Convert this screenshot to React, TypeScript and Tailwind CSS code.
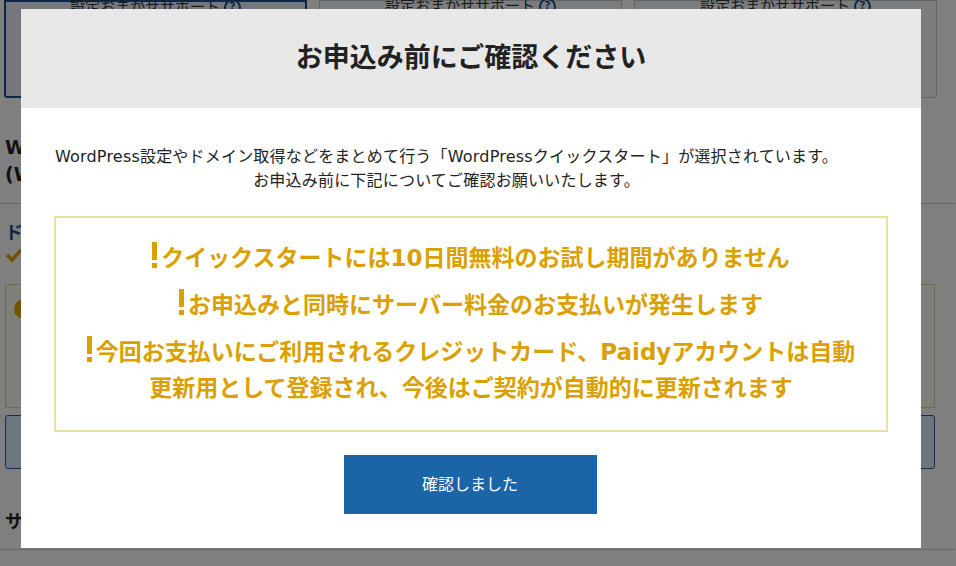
import React from 'react';

const FONT = { fontFamily: '"DejaVu Sans", "Noto Sans CJK JP", sans-serif' };

function Bang() {
  return (
    <span className="mr-[4px] inline-block align-[-2px]">
      <span className="block h-[18px] w-[5px] bg-[#d9a000]" />
      <span className="mt-[3px] block h-[5px] w-[5px] bg-[#d9a000]" />
    </span>
  );
}

function PlanCard({ selected }: { selected?: boolean }) {
  return (
    <div
      className={
        selected
          ? 'h-[98px] w-[303px] rounded-b-[3px] border-2 border-[#1f4f8f] bg-[#e8f1fb]'
          : 'h-[98px] w-[303px] rounded-b-[3px] border border-[#c8c8c8] bg-[#f6f9fd]'
      }
    >
      <div className="-mt-[4px] flex items-center justify-center gap-[4px] text-[15px] leading-[18px] text-[#333]">
        設定おまかせサポート
        <span className="flex h-[17px] w-[17px] items-center justify-center rounded-full border-2 border-[#1f4f8f] text-[11px] font-bold text-[#1f4f8f]">
          ?
        </span>
      </div>
    </div>
  );
}

// page behind the dialog
function Page() {
  return (
    <div className="min-h-[566px] w-[956px] overflow-hidden bg-white" style={FONT}>
      <div className="flex w-[954px] gap-[12px] pl-[4px]">
        <PlanCard selected />
        <PlanCard />
        <PlanCard />
      </div>
      <div className="pl-[5px] pt-[36px] text-[19px] font-bold leading-[27px] text-[#222]">
        <div>WordPressクイックスタート</div>
        <div>(WordPressテーマ)</div>
      </div>
      <div className="mt-[15px] h-px w-[954px] bg-[#c8c8c8]" />
      <div className="pl-[5px] pt-[16px] text-[18px] font-bold leading-[26px] text-[#1f4f8f]">ドメイン</div>
      <div className="pl-[5px] pt-[2px]">
        <svg width="18" height="14" viewBox="0 0 18 14">
          <path d="M2 7 L7 12 L16 2" fill="none" stroke="#e0a000" strokeWidth="3.5" />
        </svg>
      </div>
      <div className="ml-[5px] mt-[22px] flex h-[124px] w-[930px] border border-[#d8d3a8] bg-[#fffef2] px-[8px] pt-[14px]">
        <span className="h-[20px] w-[20px] rounded-full bg-[#e0a800]" />
      </div>
      <div className="ml-[5px] mt-[7px] h-[54px] w-[930px] rounded-[3px] border border-[#2a5ea8] bg-[#d6ecff]" />
      <div className="pl-[5px] pt-[42px] text-[18px] font-bold leading-[22px] text-[#222]">サーバー</div>
      <div className="mt-[16px] h-px w-[954px] bg-[#c8c8c8]" />
    </div>
  );
}

export default function App() {
  return (
    <div className="relative h-[566px] w-[956px] overflow-hidden">
      <Page />
      <div className="absolute inset-0 bg-black/50">
        <div className="ml-[21px] mt-[9px] w-[900px] bg-white" style={FONT}>
          <div className="flex h-[99px] items-center justify-center bg-[#e8e8e8]">
            <h1 className="text-[27px] font-bold text-[#222]">お申込み前にご確認ください</h1>
          </div>
          <div className="px-[33px] pb-[34px] pt-[37px]">
            <p className="w-[785px] text-center text-[16px] leading-[24px] tracking-[0.2px] text-[#222]">
              WordPress設定やドメイン取得などをまとめて行う「WordPressクイックスタート」が選択されています。
              <br />
              お申込み前に下記についてご確認お願いいたします。
            </p>
            <div className="mt-[23px] flex w-[834px] flex-col gap-[11px] border-2 border-[#e8e09c] pb-[24px] pt-[22px] text-center text-[23px] font-bold leading-[36px] text-[#d9a000]">
              <p>
                <Bang />
                クイックスタートには10日間無料のお試し期間がありません
              </p>
              <p>
                <Bang />
                お申込みと同時にサーバー料金のお支払いが発生します
              </p>
              <p>
                <Bang />
                今回お支払いにご利用されるクレジットカード、Paidyアカウントは自動
                <br />
                更新用として登録され、今後はご契約が自動的に更新されます
              </p>
            </div>
            <div className="mt-[23px] flex justify-center pr-[2px]">
              <button className="h-[59px] w-[253px] bg-[#1b64a6] text-[16px] text-white">確認しました</button>
            </div>
          </div>
        </div>
      </div>
    </div>
  );
}
